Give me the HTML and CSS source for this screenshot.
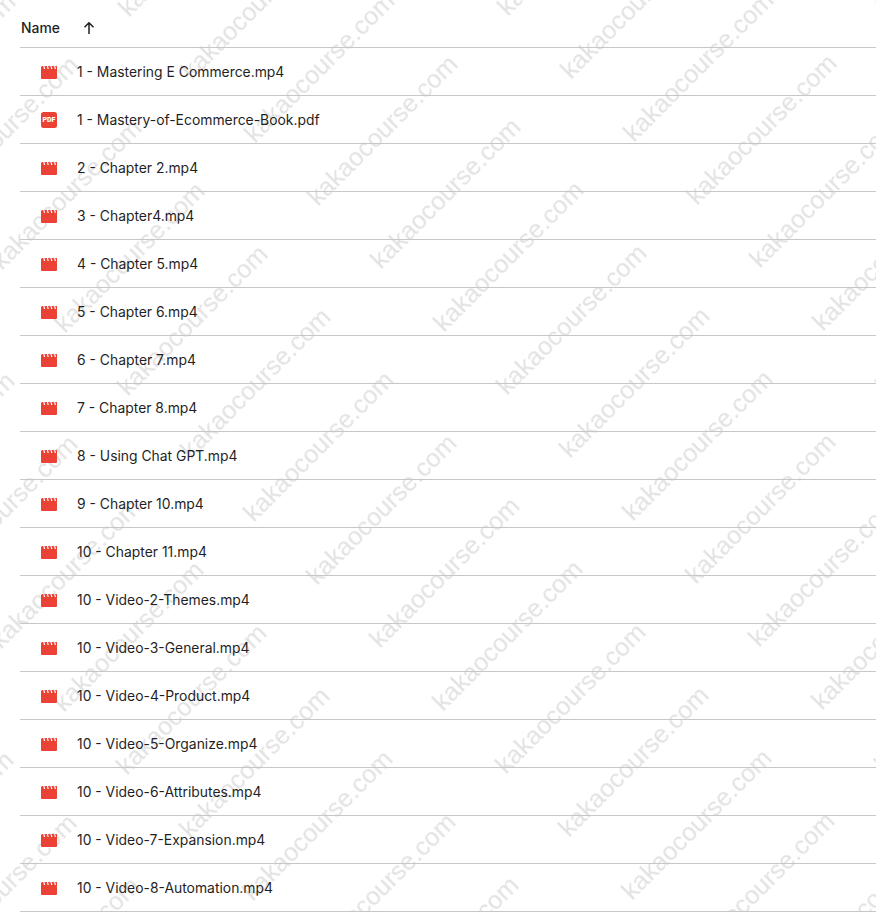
FILE: index.html
```html
<!DOCTYPE html>
<html lang="en">
<head>
    <meta charset="UTF-8">
    <meta name="viewport" content="width=device-width, initial-scale=1.0">
    <title>Name</title>
    <link rel="stylesheet" href="styles.css">
</head>
<body>
    <!-- watermark tiled behind the list -->
    <svg class="watermark" width="876" height="912">
        <defs>
            <pattern id="wm" width="268.7" height="89.1" patternUnits="userSpaceOnUse" patternTransform="translate(634 143) rotate(-45)">
                <text x="0" y="0" class="wm-text">kakaocourse.com</text>
                <text x="0" y="89.1" class="wm-text">kakaocourse.com</text>
            </pattern>
        </defs>
        <rect width="876" height="912" fill="url(#wm)"/>
    </svg>

    <svg width="0" height="0" class="icon-defs">
        <symbol id="icon-video" viewBox="0 0 16 16">
            <path fill="#ea4335" d="M0 5V3L1 2H2.200L3 5H4.200L3.400 2H5.800L6.600 5H7.800L7 2H9.400L10.200 5H11.400L10.600 2H13L13.800 5H15L14.200 2H16V14a1 1 0 0 1-1 1H1a1 1 0 0 1-1-1Z"/>
        </symbol>
    </svg>

    <div class="file-list">
        <div class="list-header">
            <span class="name-col">Name</span>
            <svg class="sort-arrow" viewBox="0 0 16 16" width="16" height="16">
                <path d="M8 14V3M3.500 7.300 8 2.800l4.500 4.500" fill="none" stroke="#1f1f1f" stroke-width="1.500"/>
            </svg>
        </div>
        <div class="file-row"><svg class="file-icon"><use href="#icon-video"/></svg><span>1 - Mastering E Commerce.mp4</span></div>
        <div class="file-row"><span class="pdf-icon">PDF</span><span>1 - Mastery-of-Ecommerce-Book.pdf</span></div>
        <div class="file-row"><svg class="file-icon"><use href="#icon-video"/></svg><span>2 - Chapter 2.mp4</span></div>
        <div class="file-row"><svg class="file-icon"><use href="#icon-video"/></svg><span>3 - Chapter4.mp4</span></div>
        <div class="file-row"><svg class="file-icon"><use href="#icon-video"/></svg><span>4 - Chapter 5.mp4</span></div>
        <div class="file-row"><svg class="file-icon"><use href="#icon-video"/></svg><span>5 - Chapter 6.mp4</span></div>
        <div class="file-row"><svg class="file-icon"><use href="#icon-video"/></svg><span>6 - Chapter 7.mp4</span></div>
        <div class="file-row"><svg class="file-icon"><use href="#icon-video"/></svg><span>7 - Chapter 8.mp4</span></div>
        <div class="file-row"><svg class="file-icon"><use href="#icon-video"/></svg><span>8 - Using Chat GPT.mp4</span></div>
        <div class="file-row"><svg class="file-icon"><use href="#icon-video"/></svg><span>9 - Chapter 10.mp4</span></div>
        <div class="file-row"><svg class="file-icon"><use href="#icon-video"/></svg><span>10 - Chapter 11.mp4</span></div>
        <div class="file-row"><svg class="file-icon"><use href="#icon-video"/></svg><span>10 - Video-2-Themes.mp4</span></div>
        <div class="file-row"><svg class="file-icon"><use href="#icon-video"/></svg><span>10 - Video-3-General.mp4</span></div>
        <div class="file-row"><svg class="file-icon"><use href="#icon-video"/></svg><span>10 - Video-4-Product.mp4</span></div>
        <div class="file-row"><svg class="file-icon"><use href="#icon-video"/></svg><span>10 - Video-5-Organize.mp4</span></div>
        <div class="file-row"><svg class="file-icon"><use href="#icon-video"/></svg><span>10 - Video-6-Attributes.mp4</span></div>
        <div class="file-row"><svg class="file-icon"><use href="#icon-video"/></svg><span>10 - Video-7-Expansion.mp4</span></div>
        <div class="file-row"><svg class="file-icon"><use href="#icon-video"/></svg><span>10 - Video-8-Automation.mp4</span></div>
    </div>
</body>
</html>
```

FILE: styles.css
```css
html, body {
    margin: 0;
    height: 912px;
    overflow: hidden;
    background: #fff;
}

body {
    position: relative;
    font-family: 'Inter', 'Liberation Sans', sans-serif;
    color: #1f1f1f;
}

.icon-defs {
    position: absolute;
}

.file-list {
    position: relative;
    margin-left: 20px;
}

.list-header {
    display: flex;
    align-items: center;
    height: 39px;
    padding-top: 8px;
    padding-left: 1px;
    border-bottom: 1px solid #c7c7c7;
    font-size: 13.900px;
    font-weight: 500;
}

.sort-arrow {
    margin-left: 21px;
}

.file-row {
    display: flex;
    align-items: center;
    height: 47px;
    padding-left: 21px;
    border-bottom: 1px solid #c7c7c7;
    font-size: 13.900px;
}

.file-icon {
    width: 16px;
    height: 16px;
    margin-right: 20px;
    flex: none;
}

.pdf-icon {
    width: 16px;
    height: 16px;
    margin-right: 20px;
    flex: none;
    border-radius: 2.500px;
    background: #ea4335;
    color: #fff;
    font-family: 'Roboto', sans-serif;
    font-size: 7px;
    font-weight: 900;
    line-height: 16px;
    text-align: center;
}

.watermark {
    position: absolute;
    top: 0;
    left: 0;
    pointer-events: none;
}

.wm-text {
    font-family: 'Liberation Sans', sans-serif;
    font-size: 25.500px;
    fill: #e2e2e2;
}
```
